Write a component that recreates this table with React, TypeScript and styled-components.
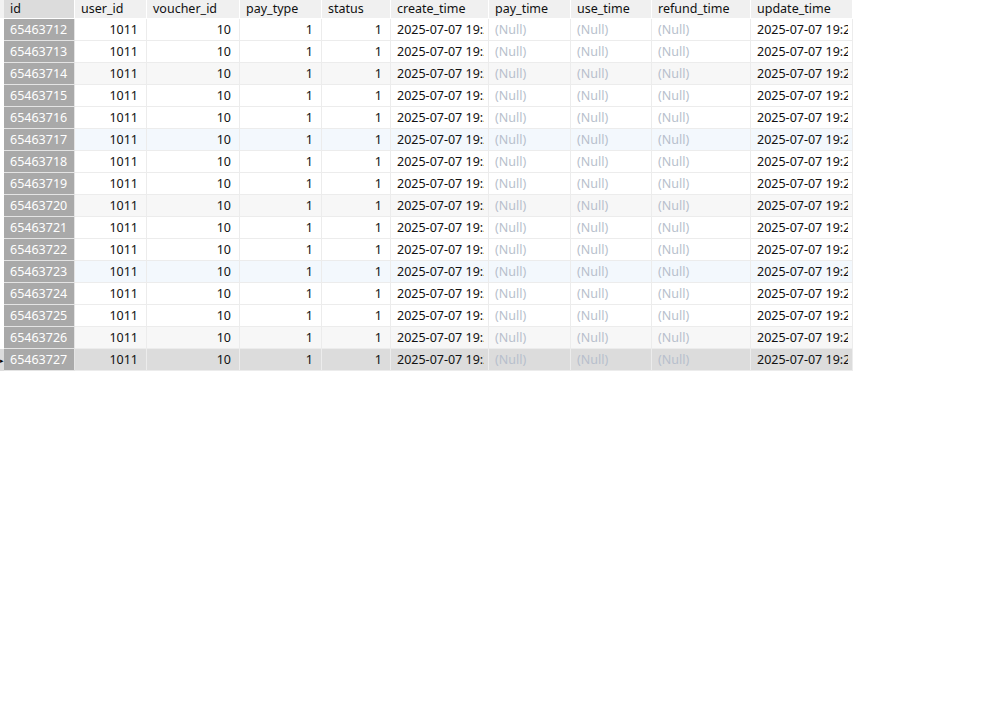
import React from "react";
import styled, { createGlobalStyle, css } from "styled-components";

const GlobalStyle = createGlobalStyle`
  html, body { margin: 0; padding: 0; background: #ffffff; }
  * { box-sizing: border-box; }
`;

type Col = { key: string; width: number; align: "left" | "right" };

const columns: Col[] = [
  { key: "id", width: 71, align: "left" },
  { key: "user_id", width: 72, align: "right" },
  { key: "voucher_id", width: 93, align: "right" },
  { key: "pay_type", width: 82, align: "right" },
  { key: "status", width: 69, align: "right" },
  { key: "create_time", width: 98, align: "left" },
  { key: "pay_time", width: 82, align: "left" },
  { key: "use_time", width: 81, align: "left" },
  { key: "refund_time", width: 99, align: "left" },
  { key: "update_time", width: 102, align: "left" },
];

const Grid = styled.div`
  display: grid;
  grid-template-columns: 4px ${columns.map((c) => `${c.width}px`).join(" ")};
  grid-auto-rows: 22px;
  grid-template-rows: 19px;
  width: max-content;
  font-family: "Noto Sans", "Liberation Sans", sans-serif;
  font-size: 12.5px;
  color: #111111;
`;

const HeaderMarker = styled.div`
  background: #f2f2f2;
  border-bottom: 1px solid #ffffff;
`;

const HeaderCell = styled.div<{ $active?: boolean }>`
  background: ${(p) => (p.$active ? "#dcdcdc" : "#f0f0f0")};
  border-right: 1px solid #ffffff;
  border-bottom: 1px solid #ffffff;
  padding: 0 4px 2px 6px;
  display: flex;
  align-items: center;
  white-space: nowrap;
  overflow: hidden;
  color: #111111;
`;

const Marker = styled.div<{ $selected?: boolean }>`
  background: ${(p) => (p.$selected ? "#dcdcdc" : "#ffffff")};
  display: flex;
  align-items: center;
  justify-content: flex-start;
  font-size: 7px;
  line-height: 1;
  color: #000000;
  overflow: hidden;
`;

const Cell = styled.div<{ $bg: string; $align: "left" | "right"; $null?: boolean }>`
  background: ${(p) => p.$bg};
  border-right: 1px solid #ececec;
  border-bottom: 1px solid #ececec;
  display: flex;
  align-items: center;
  white-space: nowrap;
  overflow: hidden;
  ${(p) =>
    p.$align === "right"
      ? css`
          justify-content: flex-end;
          padding: 0 8px 0 4px;
        `
      : css`
          justify-content: flex-start;
          padding: 0 4px 0 6px;
        `}
  color: ${(p) => (p.$null ? "#b7bfcc" : "#111111")};
`;

const Clip = styled.span`
  display: block;
  min-width: 0;
  overflow: hidden;
  white-space: nowrap;
`;

const IdCell = styled.div`
  background: #a9a9a9;
  color: #ffffff;
  border-right: 1px solid #e4e4e4;
  border-bottom: 1px solid #e4e4e4;
  display: flex;
  align-items: center;
  padding: 0 4px 0 6px;
  white-space: nowrap;
  overflow: hidden;
`;

const rowBg = (i: number, last: boolean) => {
  if (last) return "#dcdcdc";
  const n = i + 1;
  if (n % 6 === 0) return "#f3f8fd";
  if (n % 6 === 3) return "#f7f7f7";
  return "#ffffff";
};

const ids = Array.from({ length: 16 }, (_, i) => 65463712 + i);

export default function App() {
  return (
    <>
      <GlobalStyle />
      <Grid>
        <HeaderMarker />
        {columns.map((c, i) => (
          <HeaderCell key={c.key} $active={i === 0}>
            {c.key}
          </HeaderCell>
        ))}
        {ids.map((id, i) => {
          const last = i === ids.length - 1;
          const bg = rowBg(i, last);
          return (
            <React.Fragment key={id}>
              <Marker $selected={last}>{last ? "▸" : ""}</Marker>
              <IdCell>{id}</IdCell>
              <Cell $bg={bg} $align="right">1011</Cell>
              <Cell $bg={bg} $align="right">10</Cell>
              <Cell $bg={bg} $align="right">1</Cell>
              <Cell $bg={bg} $align="right">1</Cell>
              <Cell $bg={bg} $align="left">
                <Clip>2025-07-07 19:23:01</Clip>
              </Cell>
              <Cell $bg={bg} $align="left" $null>(Null)</Cell>
              <Cell $bg={bg} $align="left" $null>(Null)</Cell>
              <Cell $bg={bg} $align="left" $null>(Null)</Cell>
              <Cell $bg={bg} $align="left">
                <Clip>2025-07-07 19:23:01</Clip>
              </Cell>
            </React.Fragment>
          );
        })}
      </Grid>
    </>
  );
}
